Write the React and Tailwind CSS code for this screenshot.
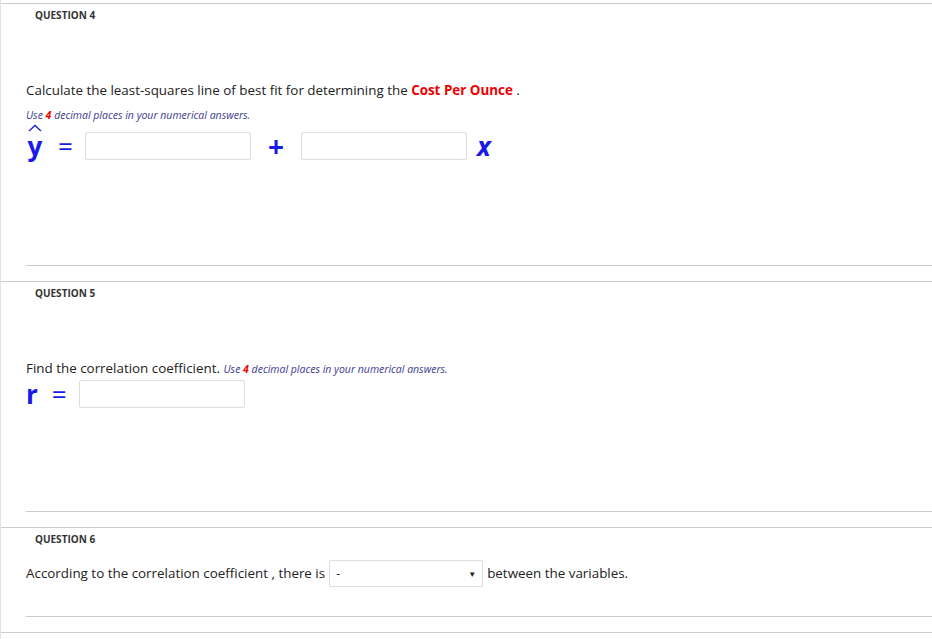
const font = { fontFamily: '"Open Sans", sans-serif' }

function Label({ children }) {
  return <div className="pl-[34px] text-[10px] font-bold text-[#333] leading-[14px] pt-[4px]">{children}</div>
}

function Hint() {
  return (
    <span className="italic text-[10.5px] text-[#3b3b8f]">
      Use <span className="font-bold text-[#e00]">4</span> decimal places in your numerical answers.
    </span>
  )
}

function Box({ w = 'w-[166px]' }) {
  return <div className={`${w} h-[28px] border border-[#ddd] rounded-[2px] bg-white`} />
}

export default function App() {
  return (
    <div style={font} className="w-[932px] h-[639px] bg-white text-[#222] border-l border-[#e3e3e3] overflow-hidden">
      <div className="h-[3px]" />
      <section className="border-t border-[#ccc] h-[263px] flex flex-col">
        <Label>QUESTION 4</Label>
        <div className="pl-[25px] mt-[58px] text-[13.4px] leading-[20px]">
          Calculate the least-squares line of best fit for determining the{' '}
          <span className="font-bold text-[#e00]">Cost Per Ounce</span> .
        </div>
        <div className="pl-[25px] mt-[5px] leading-[16px]"><Hint /></div>
        <div className="pl-[25px] mt-[9px] flex items-center h-[28px] text-[#1a1ae6]">
          <span className="text-[26px] font-bold relative leading-none w-[18px] text-center">
            y
            <svg className="absolute left-[2px] -top-[9px]" width="14" height="8" viewBox="0 0 14 8">
              <path d="M1 7 L7 1.5 L13 7" fill="none" stroke="#1a1ae6" strokeWidth="1.3" />
            </svg>
          </span>
          <span className="text-[26px] ml-[14px] mr-[12px] leading-none">=</span>
          <Box />
          <span className="text-[28px] font-bold mx-[17px] leading-none">+</span>
          <Box />
          <span className="text-[26px] font-bold italic ml-[10px] leading-none">x</span>
        </div>
        <div className="mt-auto ml-[25px] border-t border-[#ccc]" />
      </section>
      <div className="h-[15px]" />
      <section className="border-t border-[#ccc] h-[231px] flex flex-col">
        <Label>QUESTION 5</Label>
        <div className="pl-[25px] mt-[58px] text-[13.4px] leading-[20px]">
          Find the correlation coefficient. <Hint />
        </div>
        <div className="pl-[25px] mt-[1px] flex items-center h-[28px] text-[#1a1ae6]">
          <span className="text-[26px] font-bold leading-none">r</span>
          <span className="text-[26px] ml-[14px] mr-[12px] leading-none">=</span>
          <Box />
        </div>
        <div className="mt-auto ml-[25px] border-t border-[#ccc]" />
      </section>
      <div className="h-[15px]" />
      <section className="border-t border-[#ccc] h-[90px] flex flex-col">
        <Label>QUESTION 6</Label>
        <div className="pl-[25px] mt-[14px] flex items-center text-[13.4px]">
          <span>According to the correlation coefficient , there is</span>
          <div className="ml-[4px] w-[154px] h-[27px] border border-[#ddd] rounded-[2px] flex items-center justify-between px-[6px] text-[12px]">
            <span>-</span><span className="text-[8px]">▼</span>
          </div>
          <span className="ml-[4px]">between the variables.</span>
        </div>
        <div className="mt-auto ml-[25px] border-t border-[#ccc]" />
      </section>
      <div className="h-[15px]" />
      <div className="border-t border-[#ccc]" />
    </div>
  )
}
